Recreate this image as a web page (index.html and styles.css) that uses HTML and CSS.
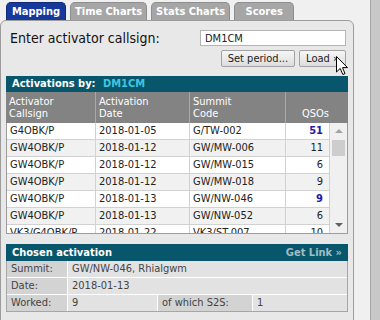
FILE: index.html
```html
<!DOCTYPE html>
<html lang="en">
  <head>
    <meta charset="UTF-8" />
    <title>Activations</title>
    <link rel="stylesheet" href="styles.css">
  </head>
  <body>
    <div class="screen">
      <div class="main">
        <nav class="tabs">
          <span class="tab active">Mapping</span>
          <span class="tab">Time Charts</span>
          <span class="tab">Stats Charts</span>
          <span class="tab">Scores</span>
        </nav>

        <div class="panel">
          <div class="call-row">
            <label for="callsign">Enter activator callsign:</label>
            <input type="text" id="callsign" value="DM1CM" />
          </div>
          <div class="btn-row">
            <button class="btn">Set period...</button>
            <button class="btn">Load &raquo;</button>
          </div>

          <section class="acts">
            <div class="bar">
              <span>Activations by: <span class="callsign">DM1CM</span></span>
            </div>
            <div class="head">
              <div class="hcell">Activator<br />Callsign</div>
              <div class="hcell">Activation<br />Date</div>
              <div class="hcell">Summit<br />Code</div>
              <div class="hcell qsos">QSOs</div>
            </div>
            <div class="body">
              <div class="rows">
                <div class="row"><span>G4OBK/P</span><span>2018-01-05</span><span>G/TW-002</span><span class="num hi">51</span></div>
                <div class="row"><span>GW4OBK/P</span><span>2018-01-12</span><span>GW/MW-006</span><span class="num">11</span></div>
                <div class="row"><span>GW4OBK/P</span><span>2018-01-12</span><span>GW/MW-015</span><span class="num">6</span></div>
                <div class="row"><span>GW4OBK/P</span><span>2018-01-12</span><span>GW/MW-018</span><span class="num">9</span></div>
                <div class="row"><span>GW4OBK/P</span><span>2018-01-13</span><span>GW/NW-046</span><span class="num hi">9</span></div>
                <div class="row"><span>GW4OBK/P</span><span>2018-01-13</span><span>GW/NW-052</span><span class="num">6</span></div>
                <div class="row"><span>VK3/G4OBK/P</span><span>2018-01-22</span><span>VK3/ST-007</span><span class="num">10</span></div>
              </div>
              <div class="scroll">
                <div class="arrow up"></div>
                <div class="track"><div class="thumb"></div></div>
                <div class="arrow down"></div>
              </div>
            </div>
          </section>

          <section class="chosen">
            <div class="bar">
              <span>Chosen activation</span>
              <span class="link">Get Link &raquo;</span>
            </div>
            <div class="details">
              <span class="lbl">Summit:</span>
              <span class="val wide">GW/NW-046, Rhialgwm</span>
              <span class="lbl">Date:</span>
              <span class="val wide">2018-01-13</span>
              <span class="lbl">Worked:</span>
              <span class="val">9</span>
              <span class="lbl">of which S2S:</span>
              <span class="val">1</span>
            </div>
          </section>
        </div>
      </div>
      <div class="gutter"></div>
      <div class="rail"></div>

      <!-- mouse pointer sitting over the Load button -->
      <svg class="cursor" width="13" height="20" viewBox="0 0 13 20">
        <path d="M0.5 0.5 L0.5 16 L4.2 12.4 L6.8 18.5 L9 17.6 L6.5 11.6 L11.5 11.6 Z" fill="#fff" stroke="#000" stroke-width="1" />
      </svg>
    </div>
  </body>
</html>
```

FILE: styles.css
```css
body {
    margin: 0;
    background-color: #f0f0f0;
    font-family: "DejaVu Sans Condensed", "DejaVu Sans", sans-serif;
    font-size: 11px;
    color: #222;
}

.screen {
    position: relative;
    display: flex;
    height: 320px;
    overflow: hidden;
}

.main {
    width: 354px;
}

.gutter {
    width: 16px;
}

.rail {
    flex: 1;
    background-color: #c8c8c8;
    border-left: 1px solid #a4a4a4;
}

/* tabs */
.tabs {
    display: flex;
    gap: 4px;
    height: 18px;
    padding: 2px 0 0 6px;
}

.tab {
    box-sizing: border-box;
    min-width: 60px;
    height: 18px;
    line-height: 17px;
    padding: 0 4px;
    border: 1px solid #8e8e8e;
    border-bottom: none;
    border-radius: 5px 5px 0 0;
    background-color: #a6a6a6;
    color: #fff;
    font-weight: bold;
    text-align: center;
}

.tab.active {
    background-color: #17399c;
    border-color: #0f2a7a;
}

/* main panel */
.panel {
    box-sizing: border-box;
    height: 310px;
    padding: 9px 5px 0 5px;
    border: 1px solid #9c9c9c;
    border-radius: 6px 6px 0 0;
    background-color: #e8e8e8;
}

.call-row {
    display: flex;
    justify-content: space-between;
    align-items: center;
    height: 16px;
}

.call-row label {
    padding-left: 4px;
    font-size: 14px;
    color: #111;
}

.call-row input {
    box-sizing: border-box;
    width: 146px;
    height: 16px;
    margin-right: 2px;
    padding: 0 4px;
    border: 1px solid #b4b4b4;
    background-color: #fff;
    font-family: inherit;
    font-size: 11px;
    color: #222;
}

.btn-row {
    display: flex;
    justify-content: flex-end;
    gap: 4px;
    margin-top: 4px;
    padding-right: 2px;
}

.btn {
    height: 17px;
    padding: 0 6px;
    border: 1px solid #a2a2a2;
    border-radius: 2px;
    background: linear-gradient(#f6f6f6, #dddddd);
    font-family: inherit;
    font-size: 11px;
    color: #222;
}

/* teal title bars */
.bar {
    display: flex;
    justify-content: space-between;
    height: 17px;
    line-height: 17px;
    padding: 0 6px;
    background-color: #07566b;
    color: #fff;
    font-weight: bold;
}

.acts {
    margin-top: 9px;
}

.acts .bar {
    height: 16px;
    line-height: 16px;
}

.callsign {
    margin-left: 4px;
    color: #3fc6de;
}

.head {
    display: grid;
    grid-template-columns: 90px 94px 96px 1fr;
    height: 31px;
    background-color: #838383;
    color: #fff;
}

.hcell {
    padding: 4px 3px 0;
    line-height: 12px;
    border-right: 1px solid #a8a8a8;
}

.hcell.qsos {
    border-right: none;
    padding: 16px 19px 0 0;
    text-align: right;
}

.body {
    display: flex;
    height: 110px;
    overflow: hidden;
    border: 1px solid #9c9c9c;
    border-top: none;
    background-color: #fff;
}

.rows {
    flex: 1;
}

.row {
    display: grid;
    grid-template-columns: 89px 94px 96px 44px;
    height: 17px;
    line-height: 16px;
    box-sizing: border-box;
    border-bottom: 1px solid #d2d2d2;
}

.row:nth-child(even) {
    background-color: #f1f1f1;
}

.row span {
    padding: 0 3px;
    border-right: 1px solid #d2d2d2;
    white-space: nowrap;
    overflow: hidden;
}

.row .num {
    padding-right: 6px;
    text-align: right;
}

.row .num.hi {
    color: #1b1ba8;
    font-weight: bold;
}

.scroll {
    display: flex;
    flex-direction: column;
    width: 17px;
    background-color: #f0f0f0;
}

.arrow {
    position: relative;
    height: 17px;
}

.arrow::after {
    content: "";
    position: absolute;
    left: 5px;
    border-left: 4px solid transparent;
    border-right: 4px solid transparent;
}

.arrow.up::after {
    top: 6px;
    border-bottom: 4px solid #a3a3a3;
}

.arrow.down::after {
    top: 7px;
    border-top: 4px solid #606060;
}

.track {
    flex: 1;
}

.thumb {
    height: 16px;
    margin: 0 2px;
    background-color: #cdcdcd;
}

/* chosen activation */
.chosen {
    margin-top: 10px;
}

.link {
    color: #a3bcc4;
}

.details {
    display: grid;
    grid-template-columns: 60px 89px 94px 1fr;
    gap: 1px;
    border: 1px solid #a6a6a6;
    border-top: none;
    background-color: #fff;
    color: #444;
}

.details span {
    height: 16px;
    line-height: 16px;
    padding: 0 4px;
}

.details .lbl {
    background-color: #d3d3d3;
}

.details .val {
    background-color: #e2e2e2;
}

.details .wide {
    grid-column: span 3;
}

.cursor {
    position: absolute;
    left: 336px;
    top: 56px;
}
```
